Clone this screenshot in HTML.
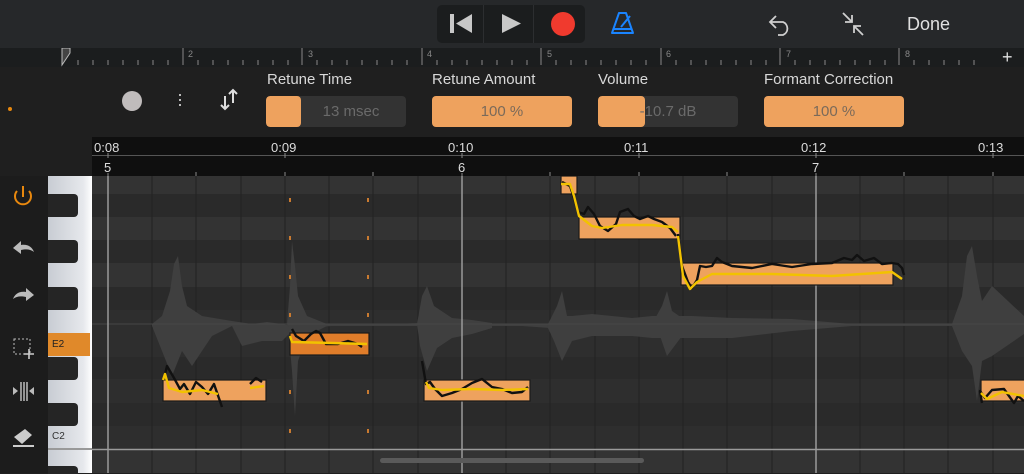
<!DOCTYPE html>
<html><head><style>
*{margin:0;padding:0;box-sizing:border-box}
body{width:1024px;height:473px;overflow:hidden;background:#1f1f1f;font-family:"Liberation Sans",sans-serif;position:relative}
.a{position:absolute}
.lbl{color:#d8d8d8;font-size:15px}
.box{height:31px;border-radius:4px;background:#333;color:#6a6a6a;font-size:15px;text-align:center;line-height:31px;overflow:hidden}
.or{background:#eea25e;color:#7a6a5a}
</style></head><body>
<div class="a" style="left:0;top:0;width:1024px;height:48px;background:#26282a"></div>
<div class="a" style="left:437px;top:5px;width:148px;height:38px;background:#1b1d1e;border-radius:5px"></div>
<div class="a" style="left:483px;top:5px;width:1px;height:38px;background:#2c2e30"></div>
<div class="a" style="left:533px;top:5px;width:1px;height:38px;background:#2c2e30"></div>
<svg class="a" style="left:0;top:0" width="1024" height="48">
<rect x="450" y="14" width="4" height="19" fill="#c8c8c8"/><path d="M472 14 L472 33 L456 23.5Z" fill="#c8c8c8"/>
<path d="M502 14 L502 33 L521 23.5Z" fill="#c8c8c8"/>
<circle cx="563" cy="24" r="12" fill="#f03a2e"/>
<path d="M619 13 L626 13 L633 33 L612 33 Z M613 29 L632 29 M621 27 L630 16" stroke="#1a84ff" stroke-width="2" fill="none" stroke-linejoin="round"/>
<path d="M776 16 L770 22 L776 28 M770 22 L783 22 A7 7 0 0 1 783 35 L778 35" stroke="#cfcfcf" stroke-width="1.8" fill="none"/>
<path d="M843 13 L852 22 M852 15 L852 22 L845 22 M863 35 L854 26 M854 33 L854 26 L861 26" stroke="#cfcfcf" stroke-width="1.8" fill="none"/>
</svg>
<div class="a" style="left:907px;top:14px;color:#e0e0e0;font-size:18px">Done</div>
<div class="a" style="left:0;top:48px;width:1024px;height:19px;background:#1b1d1e"></div>
<svg class="a" style="left:0;top:48px" width="1024" height="19">
<path d="M62 0 L70 0 L70 5 L62 17 Z" fill="#444" stroke="#bbb" stroke-width="1"/>
<g stroke="#888" stroke-width="1">
<path d="M183 0V17M302 0V17M422 0V17M541 0V17M661 0V17M780 0V17M899 0V17"/>
<path d="M78 12V17M93 12V17M108 12V17M123 12V17M138 12V17M153 12V17M168 12V17M198 12V17M213 12V17M228 12V17M243 12V17M258 12V17M273 12V17M288 12V17M317 12V17M332 12V17M347 12V17M362 12V17M377 12V17M392 12V17M407 12V17M437 12V17M452 12V17M467 12V17M482 12V17M497 12V17M512 12V17M527 12V17M556 12V17M571 12V17M586 12V17M601 12V17M616 12V17M631 12V17M646 12V17M676 12V17M691 12V17M706 12V17M721 12V17M736 12V17M751 12V17M766 12V17M795 12V17M810 12V17M825 12V17M840 12V17M855 12V17M870 12V17M885 12V17M914 12V17M929 12V17M944 12V17M959 12V17M974 12V17"/>
</g>
<g fill="#888" font-size="9" font-family="Liberation Sans"><text x="188" y="9">2</text><text x="308" y="9">3</text><text x="427" y="9">4</text><text x="547" y="9">5</text><text x="666" y="9">6</text><text x="786" y="9">7</text><text x="905" y="9">8</text></g>
<text x="1002" y="15" fill="#e0e0e0" font-size="18">+</text>
</svg>
<div class="a" style="left:8px;top:107px;width:4px;height:4px;border-radius:2px;background:#e8880e"></div>
<div class="a" style="left:122px;top:91px;width:20px;height:20px;border-radius:10px;background:#c0bcbc"></div>
<div class="a" style="left:179px;top:94px;width:2px;height:2px;background:#bbb;box-shadow:0 5px #bbb,0 10px #bbb"></div>
<svg class="a" style="left:218px;top:88px" width="22" height="24"><path d="M7 8V21M3 17L7 21L11 17M15 15V2M11 6L15 2L19 6" stroke="#ddd" stroke-width="2" fill="none"/></svg>
<div class="a lbl" style="left:267px;top:71px">Retune Time</div>
<div class="a box" style="left:266px;top:96px;width:140px"><div class="a or" style="left:0;top:0;width:35px;height:31px;border-radius:4px"></div><span style="position:relative;left:15px">13 msec</span></div>
<div class="a lbl" style="left:432px;top:71px">Retune Amount</div>
<div class="a box or" style="left:432px;top:96px;width:140px">100 %</div>
<div class="a lbl" style="left:598px;top:71px">Volume</div>
<div class="a box" style="left:598px;top:96px;width:140px"><div class="a or" style="left:0;top:0;width:47px;height:31px;border-radius:4px"></div><span style="position:relative">-10.7 dB</span></div>
<div class="a lbl" style="left:764px;top:71px">Formant Correction</div>
<div class="a box or" style="left:764px;top:96px;width:140px">100 %</div>
<div class="a" style="left:92px;top:137px;width:932px;height:39px;background:#0f0f0f"></div>
<svg class="a" style="left:92px;top:137px" width="932" height="39">
<line x1="0" y1="18.5" x2="932" y2="18.5" stroke="#555"/>
<g fill="#ddd" font-size="13" font-family="Liberation Sans"><text x="2" y="15">0:08</text><text x="179" y="15">0:09</text><text x="356" y="15">0:10</text><text x="532" y="15">0:11</text><text x="709" y="15">0:12</text><text x="886" y="15">0:13</text>
<text x="12" y="35">5</text><text x="366" y="35">6</text><text x="720" y="35">7</text></g>
<g stroke="#888"><path d="M16 16V21M193 16V21M370 16V21M547 16V21M724 16V21M901 16V21"/><path d="M16 36V39M104 35V39M193 35V39M281 35V39M370 36V39M458 35V39M547 35V39M635 35V39M724 36V39M812 35V39M901 35V39"/></g>
</svg>
<div class="a" style="left:0;top:176px;width:48px;height:297px;background:#1c1c1c"></div>
<svg class="a" style="left:0;top:176px" width="48" height="297">
<path d="M17 15 A8 8 0 1 0 29 15 M23 10V21" stroke="#e8880e" stroke-width="2" fill="none"/>
<path d="M13 72 L21 65 L21 69 C28 68 32 71 34 76 C30 73 26 73 21 74 L21 78Z" fill="#bbb"/>
<path d="M34 119 L26 112 L26 116 C19 115 15 118 13 123 C17 120 21 120 26 121 L26 125Z" fill="#bbb"/>
<rect x="14" y="163" width="16" height="15" fill="none" stroke="#bbb" stroke-dasharray="2 2"/><path d="M29 173V183M24 178H34" stroke="#ccc" stroke-width="1.6"/>
<path d="M13 211 L18 215 L13 219Z M34 211 L29 215 L34 219Z" fill="#bbb"/><path d="M21 206V225M24 206V225M27 206V225" stroke="#bbb" stroke-width="1.5"/>
<path d="M14 261 L25 253 L32 259 L22 268 Z" fill="#ccc"/><path d="M13 270 H34" stroke="#ccc" stroke-width="2"/>
</svg>
<div class="a" style="left:48px;top:176px;width:44px;height:297px;background:linear-gradient(90deg,#c8ccd3,#e6e8ec 80%,#fff)"></div>
<div class="a" style="left:48px;top:194px;width:30px;height:23px;background:#252525;border-radius:0 4px 4px 0"></div>
<div class="a" style="left:48px;top:240px;width:30px;height:23px;background:#252525;border-radius:0 4px 4px 0"></div>
<div class="a" style="left:48px;top:287px;width:30px;height:23px;background:#252525;border-radius:0 4px 4px 0"></div>
<div class="a" style="left:48px;top:333px;width:42px;height:23px;background:#e0892a;color:#222;font-size:10px;line-height:23px;padding-left:4px">E2</div>
<div class="a" style="left:48px;top:357px;width:30px;height:23px;background:#252525;border-radius:0 4px 4px 0"></div>
<div class="a" style="left:48px;top:403px;width:30px;height:23px;background:#252525;border-radius:0 4px 4px 0"></div>
<div class="a" style="left:52px;top:431px;color:#333;font-size:10px">C2</div>
<div class="a" style="left:48px;top:448px;width:44px;height:2px;background:#999"></div>
<div class="a" style="left:48px;top:466px;width:30px;height:8px;background:#252525;border-radius:0 4px 0 0"></div>
<svg class="a" style="left:92px;top:176px" width="932" height="297">
<rect width="932" height="297" fill="#333"/>
<g fill="#2a2a2a"><rect y="18" width="932" height="23"/><rect y="64" width="932" height="23"/><rect y="111" width="932" height="23"/><rect y="181" width="932" height="22"/><rect y="227" width="932" height="23"/></g>
<g fill="#2e2e2e"><rect y="134" width="932" height="23"/><rect y="157" width="932" height="24"/><rect y="203" width="932" height="24"/><rect y="250" width="932" height="23"/></g>
<g stroke="#222" stroke-width="1"><path d="M60 0V297M104 0V297M149 0V297M193 0V297M237 0V297M281 0V297M326 0V297M414 0V297M458 0V297M503 0V297M547 0V297M591 0V297M635 0V297M680 0V297M768 0V297M812 0V297M856 0V297M901 0V297"/></g>
<g fill="#3f3f3f">
<path d="M60 148 L70 140 L78 115 L82 88 L86 80 L90 110 L95 130 L110 140 L140 145 L160 148 L175 146 L190 148 L200 150 L210 148 L240 148 L270 148 L300 148 L330 147 L360 148 L430 148 L500 148 L560 148 L640 148 L700 148 L760 148 L840 148 L860 148 L870 120 L875 80 L880 70 L885 100 L890 125 L900 110 L932 140 L932 158 L900 180 L890 185 L885 225 L880 190 L870 175 L860 150 L760 150 L700 151 L640 158 L560 160 L500 155 L430 150 L360 150 L300 150 L270 150 L240 150 L210 152 L200 155 L190 165 L170 165 L150 170 L140 150 L120 160 L100 190 L90 175 L80 200 L70 175 L60 150Z"/>
<path d="M195 148 L198 110 L200 65 L203 90 L206 120 L215 140 L235 148 L235 150 L215 160 L206 185 L203 240 L200 195 L196 150Z"/>
<path d="M325 148 L330 120 L335 110 L342 130 L360 142 L380 144 L400 147 L400 152 L380 158 L360 162 L345 172 L335 195 L328 170Z"/>
<path d="M455 150 L465 130 L470 115 L475 140 L480 140 L500 138 L540 142 L560 140 L600 140 L640 142 L700 143 L760 148 L760 150 L700 155 L640 162 L600 162 L560 162 L540 160 L500 160 L480 165 L470 185 L462 165Z"/>
<path d="M560 148 L570 130 L575 115 L580 135 L590 142 L600 145 L600 152 L590 160 L575 180 L568 160Z"/>
</g>
<path d="M0 148H932" stroke="#474747" stroke-width="1"/>
<g stroke="#9a9a9a" stroke-width="1.5"><path d="M16 0V297M370 0V297M724 0V297"/></g>
<path d="M0 273.5H932" stroke="#9a9a9a" stroke-width="1.5"/>
<g fill="#c97a30"><rect x="197" y="22" width="2" height="4"/><rect x="197" y="60" width="2" height="4"/><rect x="197" y="99" width="2" height="4"/><rect x="197" y="137" width="2" height="4"/><rect x="197" y="214" width="2" height="4"/><rect x="197" y="253" width="2" height="4"/>
<rect x="275" y="22" width="2" height="4"/><rect x="275" y="60" width="2" height="4"/><rect x="275" y="99" width="2" height="4"/><rect x="275" y="137" width="2" height="4"/><rect x="275" y="214" width="2" height="4"/><rect x="275" y="253" width="2" height="4"/></g>
<g stroke="#1a1a1a" stroke-width="1.2">
<rect x="71" y="204" width="103" height="21" fill="#eea25e"/>
<rect x="198" y="157" width="79" height="22" fill="#e07d2a"/>
<rect x="332" y="204" width="106" height="21" fill="#eea25e"/>
<rect x="469" y="0" width="16" height="18" fill="#eea25e"/>
<rect x="487" y="41" width="101" height="22" fill="#eea25e"/>
<rect x="589" y="87" width="212" height="22" fill="#eea25e"/>
<rect x="889" y="204" width="45" height="21" fill="#eea25e"/>
</g>
<g fill="none" stroke-width="2.4" stroke-linejoin="round">
<path d="M72 202 L75 190 L82 202 L88 213 L92 208 L98 218 L104 206 L110 211 L116 218 L122 208 L130 231 M158 208 L164 202 L170 206" stroke="#111"/>
<path d="M71 204 L73 198 L77 212 L90 216 L110 214 L126 218 M158 212 L172 210" stroke="#f2c200"/>
<path d="M200 153 L204 160 L212 165 L219 158 L224 155 L228 157 L234 168 L246 168 L256 165 L266 168 L270 171" stroke="#111"/>
<path d="M198 160 L200 166 L240 167 L275 168" stroke="#f2c200"/>
<path d="M330 185 L334 208 L338 206 L343 213 L350 220 L360 217 L370 213 L380 207 L390 203 L400 211 L410 213 L420 217 L430 216 L436 211" stroke="#111"/>
<path d="M334 206 L337 212 L350 214 L380 213 L410 214 L436 213" stroke="#f2c200"/>
<path d="M470 6 L478 10 L482 22 L486 36 L492 38 L496 31 L502 38 L508 50 L516 55 L524 48 L528 36 L536 33 L542 40 L548 43 L556 40 L562 43 L570 46 L578 52 L584 60" stroke="#111"/>
<path d="M469 8 L478 8 L482 20 L487 40 L500 50 L510 52 L530 49 L560 49 L580 51 L586 56" stroke="#f2c200"/>
<path d="M586 58 L590 90 L596 106 L600 112 L605 104 L608 90 L614 91 L620 90 L625 82 L630 86 L640 90 L660 92 L680 88 L700 91 L720 88 L740 87 L752 82 L760 84 L765 79 L772 85 L782 82 L790 88 L800 87 L806 88 L810 92 L812 99 M890 227 L888 215 L893 222 L900 214 L912 213 L917 220 L922 227 L926 220 L932 225" stroke="#111"/>
<path d="M586 60 L591 100 L598 113 L605 106 L620 98 L680 98 L740 100 L800 96 L810 103 M889 217 L895 223 L910 216 L932 220" stroke="#f2c200"/>
</g>
</svg>
<div class="a" style="left:380px;top:458px;width:264px;height:5px;border-radius:3px;background:#5a5a5a"></div>
</body></html>
